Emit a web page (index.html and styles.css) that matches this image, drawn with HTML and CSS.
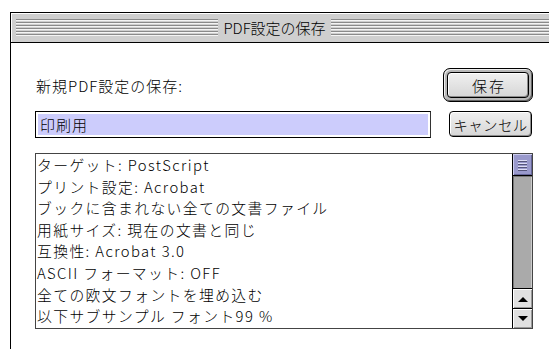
FILE: index.html
```html
<!DOCTYPE html>
<html lang="ja">
<head>
<meta charset="utf-8">
<title>PDF設定の保存</title>
<link rel="stylesheet" href="styles.css">
</head>
<body>
<div class="window">
  <div class="titlebar">
    <div class="stripes stripes-left"></div>
    <div class="title">PDF設定の保存</div>
    <div class="stripes stripes-right"></div>
  </div>
  <div class="content">
    <div class="top">
      <div class="label">新規PDF設定の保存:</div>
      <div class="default-ring"><button class="btn btn-save">保存</button></div>
      <div class="field">印刷用</div>
      <button class="btn btn-cancel">キャンセル</button>
    </div>
    <div class="list">
      <ul class="rows">
        <li>ターゲット: PostScript</li>
        <li>プリント設定: Acrobat</li>
        <li>ブックに含まれない全ての文書ファイル</li>
        <li>用紙サイズ: 現在の文書と同じ</li>
        <li>互換性: Acrobat 3.0</li>
        <li>ASCII フォーマット: OFF</li>
        <li>全ての欧文フォントを埋め込む</li>
        <li>以下サブサンプル フォント99 %</li>
      </ul>
      <div class="scrollbar">
        <div class="thumb"><span></span><span></span><span></span><span></span></div>
        <div class="track"></div>
        <div class="arrow arrow-up"><svg width="10" height="6" viewBox="0 0 10 6"><path d="M0 6 L5 1 L10 6 Z" fill="#000"/></svg></div>
        <div class="arrow arrow-down"><svg width="10" height="6" viewBox="0 0 10 6"><path d="M0 0 L10 0 L5 5 Z" fill="#000"/></svg></div>
      </div>
    </div>
  </div>
</div>
</body>
</html>
```

FILE: styles.css
```css
html, body {
  margin: 0;
  padding: 0;
  background: #fff;
  overflow: hidden;
}
body {
  width: 549px;
  height: 349px;
  font-family: "Noto Sans CJK JP", "Noto Sans", sans-serif;
  font-weight: 300;
  color: #000;
}
.window {
  margin: 12px 0 0 10px;
  width: 539px;
  height: 337px;
  border: 1px solid #000;
  border-right: none;
  border-bottom: none;
  background: #fff;
  box-sizing: border-box;
}
.titlebar {
  height: 29px;
  background: #cfcfcf;
  border-bottom: 1px solid #000;
  box-shadow: inset 1px 1px 0 #fff;
  display: flex;
  align-items: center;
  padding-left: 5px;
  gap: 3px;
}
.stripes {
  height: 17px;
  background: repeating-linear-gradient(to bottom, #8a8a8a 0, #8a8a8a 1px, #f4f4f4 1px, #f4f4f4 2px, #cfcfcf 2px, #cfcfcf 3px);
}
.stripes-left {
  width: 202px;
}
.stripes-right {
  flex: 1;
}
.title {
  font-size: 15px;
  line-height: 18px;
  width: 107px;
  text-align: center;
  color: #000;
}
.content {
  padding: 25px 0 0 24px;
}
.top {
  width: 498px;
  display: grid;
  grid-template-columns: 396px 1fr;
  grid-template-rows: 34px 28px;
  row-gap: 8px;
  align-items: center;
}
.label {
  font-size: 15px;
  letter-spacing: 1px;
  padding-left: 1px;
  margin-top: 1px;
}
.default-ring {
  justify-self: end;
  width: 90px;
  height: 34px;
  box-sizing: border-box;
  border: 1px solid #000;
  border-radius: 7px;
  padding: 3px;
  background: #b8b8b8;
  box-shadow: inset 1px 1px 0 #eee, inset -1px -1px 0 #666;
}
.btn {
  font-family: "Noto Sans CJK JP", "Noto Sans", sans-serif;
  font-weight: 300;
  font-size: 15px;
  color: #000;
  border: 1px solid #000;
  border-radius: 4px;
  background: linear-gradient(#f0f0f0, #d6d6d6);
  box-shadow: inset 1px 1px 0 #fff, inset -1px -1px 0 #8c8c8c;
  padding: 0;
  margin: 0;
  cursor: default;
  display: flex;
  align-items: center;
  justify-content: center;
}
.btn-save {
  width: 100%;
  height: 100%;
  letter-spacing: 2px;
  padding-left: 2px;
}
.btn-cancel {
  justify-self: end;
  margin-right: 1px;
  width: 83px;
  height: 26px;
  letter-spacing: 0.3px;
  font-size: 14.5px;
}
.field {
  width: 396px;
  height: 27px;
  box-sizing: border-box;
  border: 1px solid #000;
  border-right-color: #333;
  box-shadow: inset 0 0 0 2px #fff;
  background: #ccccfc;
  font-size: 15px;
  letter-spacing: 1px;
  line-height: 25px;
  padding-left: 4px;
}
.list {
  margin-top: 15px;
  width: 498px;
  height: 176px;
  box-sizing: border-box;
  border: 1px solid #444;
  display: flex;
}
.rows {
  flex: 1;
  list-style: none;
  margin: 0;
  padding: 0;
  font-size: 14.8px;
  line-height: 21.6px;
}
.rows li {
  padding-left: 1px;
  white-space: nowrap;
  letter-spacing: 1.4px;
}
.scrollbar {
  width: 20px;
  display: flex;
  flex-direction: column;
  border-left: 1px solid #000;
  box-sizing: border-box;
}
.thumb {
  height: 21px;
  background: #9999cc;
  border-bottom: 1px solid #000;
  box-shadow: inset 1px 1px 0 #ccccee, inset -1px -1px 0 #666699;
  display: flex;
  flex-direction: column;
  justify-content: center;
  align-items: center;
  gap: 2px;
}
.thumb span {
  display: block;
  width: 9px;
  height: 1px;
  background: #dcdcf4;
  box-shadow: 0 1px 0 #55557a;
}
.track {
  flex: 1;
  background: #aaaaaa;
  box-shadow: inset 1px 1px 0 #777, inset -1px 0 0 #ccc;
}
.arrow {
  height: 20px;
  background: #e0e0e0;
  border-top: 1px solid #000;
  box-sizing: border-box;
  box-shadow: inset 1px 1px 0 #fff, inset -1px -1px 0 #999;
  display: flex;
  align-items: center;
  justify-content: center;
}
```
